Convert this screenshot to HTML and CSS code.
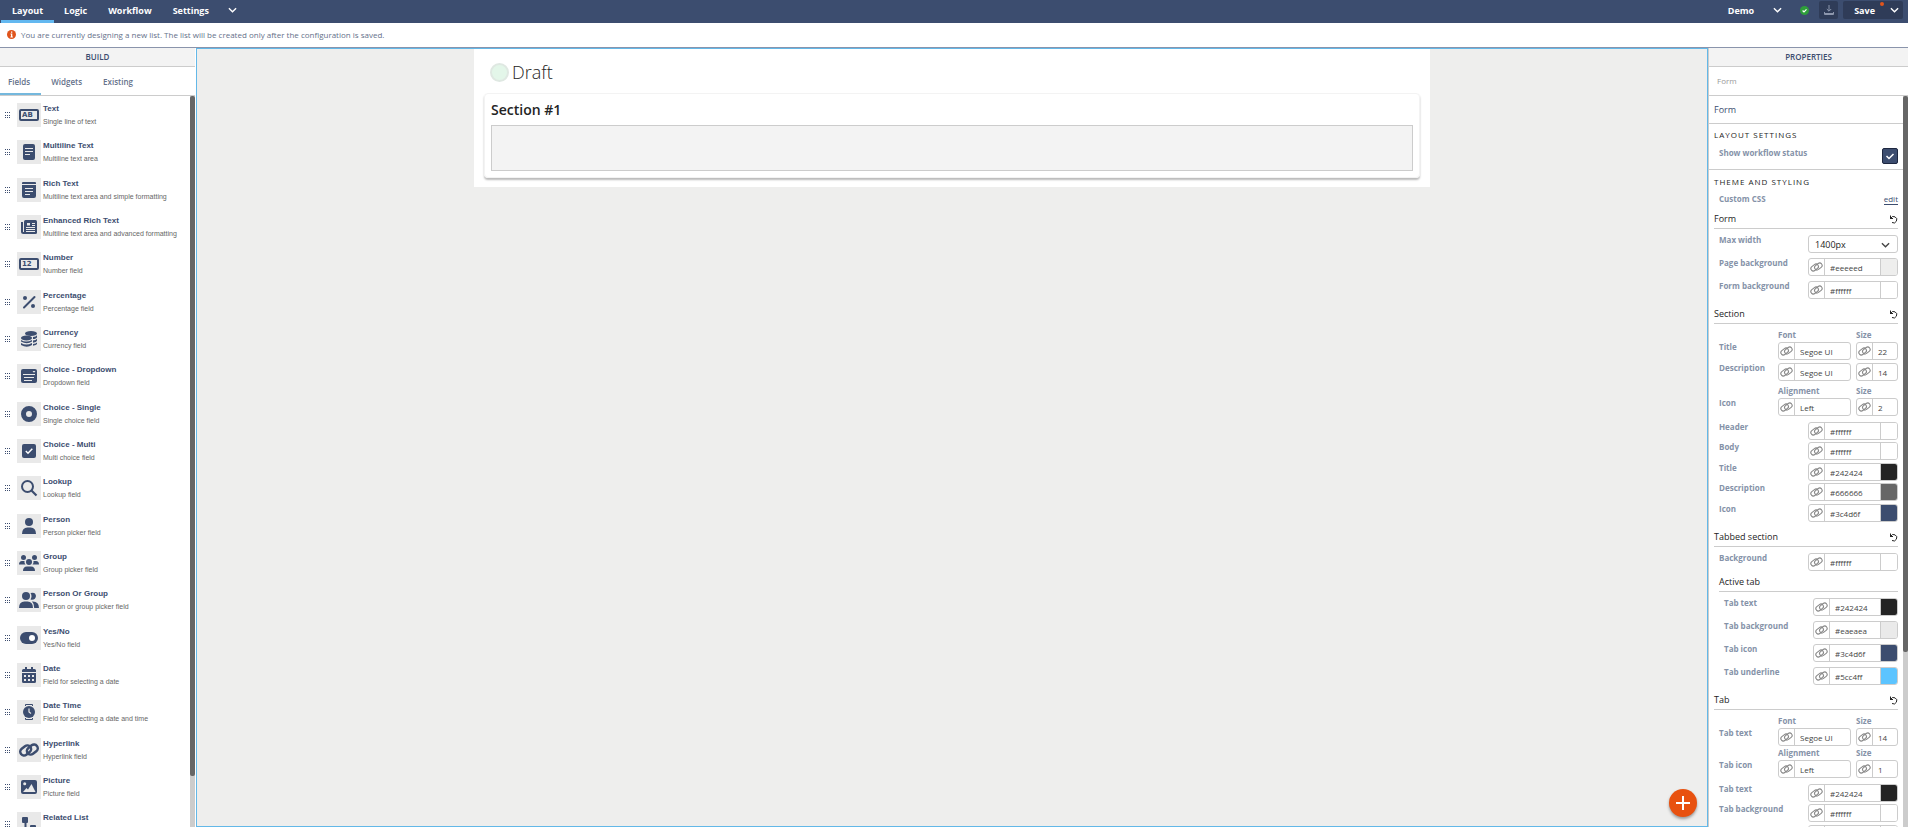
FILE: index.html
```html
<!DOCTYPE html>
<html lang="en">
<head>
<meta charset="UTF-8">
<meta name="viewport" content="width=device-width, initial-scale=1.0">
<title>Form Designer</title>
<link rel="stylesheet" href="styles.css">
</head>
<body>

<!-- shared icons -->
<svg class="sprite" aria-hidden="true">
  <symbol id="chevron" viewBox="0 0 10 6"><path d="M1 1l4 4 4-4" fill="none" stroke="currentColor" stroke-width="1.500"/></symbol>
  <symbol id="grip" viewBox="0 0 5 7"><path d="M0 0h1v1H0zM2 0h1v1H2zM4 0h1v1H4zM0 3h1v1H0zM2 3h1v1H2zM4 3h1v1H4zM0 5h1v1H0zM2 5h1v1H2zM4 5h1v1H4z" fill="currentColor"/></symbol>
  <symbol id="link" viewBox="0 0 24 20"><g fill="none" stroke="currentColor" stroke-width="3"><rect x="1" y="6" width="14" height="9" rx="4.500" transform="rotate(-38 8 10.500)"/><rect x="9" y="5" width="14" height="9" rx="4.500" transform="rotate(-38 16 9.500)"/></g></symbol>
  <symbol id="chain" viewBox="0 0 12 10"><g fill="none" stroke="currentColor"><rect x=".5" y="3.200" width="7.500" height="4.500" rx="2.200" transform="rotate(-38 4.300 5.400)"/><rect x="4" y="2.300" width="7.500" height="4.500" rx="2.200" transform="rotate(-38 7.700 4.600)"/></g></symbol>
  <symbol id="undo" viewBox="0 0 9 9"><path d="M1 3.500h3M1.500 3.500V.5M1.700 3.300A3.200 3.200 0 1 1 3 7.500" fill="none" stroke="currentColor"/></symbol>
  <symbol id="i-text" viewBox="0 0 24 24"><rect x="3" y="7" width="18" height="10" rx="1" fill="none" stroke="currentColor" stroke-width="2"/></symbol>
  <symbol id="i-multi" viewBox="0 0 24 24"><rect x="6" y="4" width="12" height="16" rx="2" fill="currentColor"/><path d="M8 8.500h8M8 11.500h8M8 14.500h5" stroke="#e9e9e9"/></symbol>
  <symbol id="i-rich" viewBox="0 0 24 24"><path d="M5 6V5q0-1 1-1h12q1 0 1 1v1zM5 7h14v11q0 2-2 2H7q-2 0-2-2z" fill="currentColor"/><path d="M8 10.500h8M8 13.500h8M8 16.500h5" stroke="#e9e9e9"/></symbol>
  <symbol id="i-news" viewBox="0 0 24 24"><rect x="7" y="5" width="13" height="14" rx="1.500" fill="currentColor"/><path d="M5 7v9.500Q5 18 6.500 18H9" fill="none" stroke="currentColor" stroke-width="2"/><path d="M9 12.500h9M9 14.500h9M9 16.500h9M15 8.500h3M15 10.500h3" stroke="#e9e9e9"/><path d="M10 8h3v2.500h-3z" fill="#e9e9e9"/></symbol>
  <symbol id="i-percent" viewBox="0 0 24 24"><path d="M7 17.500L17.500 7" stroke="currentColor" stroke-width="2" stroke-linecap="round"/><circle cx="8" cy="8" r="2" fill="currentColor"/><circle cx="16" cy="16" r="2" fill="currentColor"/></symbol>
  <symbol id="i-coins" viewBox="0 0 24 24"><g fill="currentColor"><ellipse cx="14" cy="6.500" rx="6" ry="2.500"/><path d="M16 10q3-.4 4-1.800v2Q19.500 12 16 12zM16 13.500q3-.4 4-1.800v2q-.5 1.500-4 2zM16 17q3-.4 4-1.500v1.500q-.5 1.300-4 1.800z"/><ellipse cx="9.500" cy="11" rx="5.500" ry="2.500"/><path d="M4 13q5 3 11 0v1.500q-5 3.500-11 0zM4 16q5 3 11 0v2q-5 3.500-11 0z"/></g></symbol>
  <symbol id="i-drop" viewBox="0 0 24 24"><rect x="4" y="5" width="16" height="14" rx="2" fill="currentColor"/><path d="M6 10.500h12M7 13.500h10M7 16.500h8" stroke="#e9e9e9"/><path d="M15.500 7h3L17 8.700z" fill="#e9e9e9"/></symbol>
  <symbol id="i-radio" viewBox="0 0 24 24"><circle cx="12" cy="12" r="5.500" fill="none" stroke="currentColor" stroke-width="5"/></symbol>
  <symbol id="i-check" viewBox="0 0 24 24"><rect x="5" y="5" width="14" height="14" rx="2" fill="currentColor"/><path d="M8.800 12l2.200 2.200 4.300-4.400" fill="none" stroke="#fff" stroke-width="1.500"/></symbol>
  <symbol id="i-search" viewBox="0 0 24 24"><circle cx="10.500" cy="10.500" r="5.500" fill="none" stroke="currentColor" stroke-width="2"/><path d="M14.500 14.500l5 5" stroke="currentColor" stroke-width="2.200"/></symbol>
  <symbol id="i-person" viewBox="0 0 24 24"><circle cx="12" cy="8" r="4" fill="currentColor"/><path d="M5 20q0-6.500 5.500-6.500h3Q19 13.500 19 20z" fill="currentColor"/></symbol>
  <symbol id="i-group" viewBox="0 0 24 24"><g fill="currentColor"><circle cx="6.500" cy="6.500" r="2.500"/><circle cx="17.500" cy="6.500" r="2.500"/><circle cx="12" cy="11" r="3"/><path d="M2 13.500q0-3.500 3-3.500h2.500q-.4 2 1 3.500zM22 13.500q0-3.500-3-3.500h-2.500q.4 2-1 3.500zM6 20q0-4.500 4-4.500h4q4 0 4 4.500z"/></g></symbol>
  <symbol id="i-people" viewBox="0 0 24 24"><g fill="currentColor"><circle cx="9" cy="8" r="4"/><path d="M2 20q0-6.500 5.500-6.500h3q5.500 0 5.500 6.500zM13.500 11.500q2-3.500 0-6.500 5-1.500 5.500 3-.5 4.500-5.500 3.500zM15 13.500q7-.5 7 6.500h-4.800q0-4.500-2.200-6.500z"/></g></symbol>
  <symbol id="i-toggle" viewBox="0 0 24 24"><rect x="3" y="6" width="18" height="12" rx="6" fill="currentColor"/><circle cx="15" cy="12" r="3" fill="#fff"/></symbol>
  <symbol id="i-date" viewBox="0 0 24 24"><path d="M5 9V7.500Q5 6 6.500 6H8V4h2v2h4V4h2v2h1.500Q19 6 19 7.500V9zM5 10h14v8.500q0 1.500-1.500 1.500h-11Q5 20 5 18.500z" fill="currentColor"/><path d="M7 12h2v2H7zM11 12h2v2h-2zM15 12h2v2h-2zM7 16h2v2H7zM11 16h2v2h-2zM15 16h2v2h-2z" fill="#e9e9e9"/></symbol>
  <symbol id="i-watch" viewBox="0 0 24 24"><circle cx="12" cy="12" r="6" fill="currentColor"/><path d="M8.500 6V4.500h7V6M8.500 18v1.500h7V18" fill="none" stroke="currentColor"/><path d="M12 8.500V12l2 1.500" fill="none" stroke="#e9e9e9" stroke-width="1.200"/></symbol>
  <symbol id="i-picture" viewBox="0 0 24 24"><rect x="4" y="5" width="16" height="14" rx="2" fill="currentColor"/><circle cx="7.700" cy="8.800" r="1.500" fill="#e9e9e9"/><path d="M6 17l3.500-4 1.500 1.500L14.500 9l4 8z" fill="#e9e9e9"/></symbol>
  <symbol id="i-related" viewBox="0 0 24 24"><rect x="5" y="5" width="6" height="6" rx="1" fill="currentColor"/><path d="M8.500 10v6.500H14" fill="none" stroke="currentColor" stroke-width="2"/><rect x="13" y="13" width="6" height="6" rx="1" fill="currentColor"/></symbol>
</svg>

<header class="topbar">
  <nav class="topnav">
    <a class="active" href="#">Layout</a>
    <a href="#">Logic</a>
    <a href="#">Workflow</a>
    <a href="#">Settings</a>
    <button class="more" aria-label="More"><svg class="chev"><use href="#chevron"/></svg></button>
  </nav>
  <div class="actions">
    <button class="demo">Demo <svg class="chev"><use href="#chevron"/></svg></button>
    <svg class="status-ok" viewBox="0 0 9 9"><circle cx="4.500" cy="4.500" r="4.500" fill="#2e9e3a"/><path d="M2.600 4.500l1.400 1.400 2.500-2.500" fill="none" stroke="#fff" stroke-width="1.200"/></svg>
    <button class="download" aria-label="Download"><svg viewBox="0 0 10 10"><path d="M5 0v6M2.800 4L5 6.200 7.200 4M.5 7v2.500h9V7" fill="none" stroke="currentColor"/><path d="M1 8h8v1.500H1z" fill="currentColor"/></svg></button>
    <button class="save">Save <svg class="chev"><use href="#chevron"/></svg><span class="dot"></span></button>
  </div>
</header>

<div class="notice">
  <svg viewBox="0 0 9 9"><circle cx="4.500" cy="4.500" r="4.500" fill="#e0541c"/><path d="M4 1.500h1.300v1.200H4zM3.500 3.500h1.800v3h.6v1H3.400v-1H4v-2h-.5z" fill="#fff"/></svg>
  <span>You are currently designing a new list. The list will be created only after the configuration is saved.</span>
</div>

<main class="designer">

  <aside class="build">
    <h2 class="panel-title">BUILD</h2>
    <nav class="tabs">
      <a class="active" href="#">Fields</a>
      <a href="#">Widgets</a>
      <a href="#">Existing</a>
    </nav>
    <div class="scroller">
      <ul class="fields">
        <li><svg class="grip"><use href="#grip"/></svg><span class="icon"><svg><use href="#i-text"/></svg><b class="glyph">AB</b></span><div><h3>Text</h3><p>Single line of text</p></div></li>
        <li><svg class="grip"><use href="#grip"/></svg><span class="icon"><svg><use href="#i-multi"/></svg></span><div><h3>Multiline Text</h3><p>Multiline text area</p></div></li>
        <li><svg class="grip"><use href="#grip"/></svg><span class="icon"><svg><use href="#i-rich"/></svg></span><div><h3>Rich Text</h3><p>Multiline text area and simple formatting</p></div></li>
        <li><svg class="grip"><use href="#grip"/></svg><span class="icon"><svg><use href="#i-news"/></svg></span><div><h3>Enhanced Rich Text</h3><p>Multiline text area and advanced formatting</p></div></li>
        <li><svg class="grip"><use href="#grip"/></svg><span class="icon"><svg><use href="#i-text"/></svg><b class="glyph">12</b></span><div><h3>Number</h3><p>Number field</p></div></li>
        <li><svg class="grip"><use href="#grip"/></svg><span class="icon"><svg><use href="#i-percent"/></svg></span><div><h3>Percentage</h3><p>Percentage field</p></div></li>
        <li><svg class="grip"><use href="#grip"/></svg><span class="icon"><svg><use href="#i-coins"/></svg></span><div><h3>Currency</h3><p>Currency field</p></div></li>
        <li><svg class="grip"><use href="#grip"/></svg><span class="icon"><svg><use href="#i-drop"/></svg></span><div><h3>Choice - Dropdown</h3><p>Dropdown field</p></div></li>
        <li><svg class="grip"><use href="#grip"/></svg><span class="icon"><svg><use href="#i-radio"/></svg></span><div><h3>Choice - Single</h3><p>Single choice field</p></div></li>
        <li><svg class="grip"><use href="#grip"/></svg><span class="icon"><svg><use href="#i-check"/></svg></span><div><h3>Choice - Multi</h3><p>Multi choice field</p></div></li>
        <li><svg class="grip"><use href="#grip"/></svg><span class="icon"><svg><use href="#i-search"/></svg></span><div><h3>Lookup</h3><p>Lookup field</p></div></li>
        <li><svg class="grip"><use href="#grip"/></svg><span class="icon"><svg><use href="#i-person"/></svg></span><div><h3>Person</h3><p>Person picker field</p></div></li>
        <li><svg class="grip"><use href="#grip"/></svg><span class="icon"><svg><use href="#i-group"/></svg></span><div><h3>Group</h3><p>Group picker field</p></div></li>
        <li><svg class="grip"><use href="#grip"/></svg><span class="icon"><svg><use href="#i-people"/></svg></span><div><h3>Person Or Group</h3><p>Person or group picker field</p></div></li>
        <li><svg class="grip"><use href="#grip"/></svg><span class="icon"><svg><use href="#i-toggle"/></svg></span><div><h3>Yes/No</h3><p>Yes/No field</p></div></li>
        <li><svg class="grip"><use href="#grip"/></svg><span class="icon"><svg><use href="#i-date"/></svg></span><div><h3>Date</h3><p>Field for selecting a date</p></div></li>
        <li><svg class="grip"><use href="#grip"/></svg><span class="icon"><svg><use href="#i-watch"/></svg></span><div><h3>Date Time</h3><p>Field for selecting a date and time</p></div></li>
        <li><svg class="grip"><use href="#grip"/></svg><span class="icon"><svg class="wide"><use href="#link"/></svg></span><div><h3>Hyperlink</h3><p>Hyperlink field</p></div></li>
        <li><svg class="grip"><use href="#grip"/></svg><span class="icon"><svg><use href="#i-picture"/></svg></span><div><h3>Picture</h3><p>Picture field</p></div></li>
        <li><svg class="grip"><use href="#grip"/></svg><span class="icon"><svg><use href="#i-related"/></svg></span><div><h3>Related List</h3></div></li>
      </ul>
      <div class="track"><div class="thumb"></div></div>
    </div>
  </aside>

  <section class="canvas">
    <div class="form">
      <div class="stage"><span class="circle"></span><h1>Draft</h1></div>
      <div class="section">
        <h2>Section #1</h2>
        <div class="dropzone"></div>
      </div>
    </div>
    <button class="fab" aria-label="Add"><svg viewBox="0 0 14 14"><path d="M7 0v14M0 7h14" stroke="#fff" stroke-width="2"/></svg></button>
  </section>

  <aside class="props">
    <h2 class="panel-title">PROPERTIES</h2>
    <div class="crumb">Form</div>
    <div class="scroller">
      <div class="props-body">
        <h3 class="name">Form</h3>

        <div class="block ruled">
          <h4>LAYOUT SETTINGS</h4>
          <div class="row"><label for="wf">Show workflow status</label><input class="check" type="checkbox" id="wf" checked></div>
        </div>

        <div class="block">
          <h4>THEME AND STYLING</h4>
          <div class="row css-row"><span class="label">Custom CSS</span><a href="#">edit</a></div>

          <h5>Form <button aria-label="Reset form"><svg><use href="#undo"/></svg></button></h5>
          <div class="rows loose">
            <div class="row"><label for="mw">Max width</label><div class="select"><select id="mw"><option>1400px</option></select><svg class="chev"><use href="#chevron"/></svg></div></div>
            <div class="row"><label for="pb">Page background</label><div class="color"><svg><use href="#chain"/></svg><input type="text" id="pb" value="#eeeeed"><i class="c-page"></i></div></div>
            <div class="row"><label for="fb">Form background</label><div class="color"><svg><use href="#chain"/></svg><input type="text" id="fb" value="#ffffff"><i></i></div></div>
          </div>

          <h5>Section <button aria-label="Reset section"><svg><use href="#undo"/></svg></button></h5>
          <div class="caps"><span>Font</span><span>Size</span></div>
          <div class="rows">
            <div class="row"><label for="stf">Title</label><div class="font"><svg><use href="#chain"/></svg><input type="text" id="stf" value="Segoe UI"></div><div class="size"><svg><use href="#chain"/></svg><input type="text" aria-label="Title size" value="22"></div></div>
            <div class="row"><label for="sdf">Description</label><div class="font"><svg><use href="#chain"/></svg><input type="text" id="sdf" value="Segoe UI"></div><div class="size"><svg><use href="#chain"/></svg><input type="text" aria-label="Description size" value="14"></div></div>
          </div>
          <div class="caps"><span>Alignment</span><span>Size</span></div>
          <div class="rows">
            <div class="row"><label for="sia">Icon</label><div class="font"><svg><use href="#chain"/></svg><input type="text" id="sia" value="Left"></div><div class="size"><svg><use href="#chain"/></svg><input type="text" aria-label="Icon size" value="2"></div></div>
          </div>
          <div class="rows colors">
            <div class="row"><label for="sh">Header</label><div class="color"><svg><use href="#chain"/></svg><input type="text" id="sh" value="#ffffff"><i></i></div></div>
            <div class="row"><label for="sb">Body</label><div class="color"><svg><use href="#chain"/></svg><input type="text" id="sb" value="#ffffff"><i></i></div></div>
            <div class="row"><label for="st">Title</label><div class="color"><svg><use href="#chain"/></svg><input type="text" id="st" value="#242424"><i class="c-dark"></i></div></div>
            <div class="row"><label for="sd">Description</label><div class="color"><svg><use href="#chain"/></svg><input type="text" id="sd" value="#666666"><i class="c-grey"></i></div></div>
            <div class="row"><label for="si">Icon</label><div class="color"><svg><use href="#chain"/></svg><input type="text" id="si" value="#3c4d6f"><i class="c-navy"></i></div></div>
          </div>

          <h5>Tabbed section <button aria-label="Reset tabbed section"><svg><use href="#undo"/></svg></button></h5>
          <div class="rows">
            <div class="row"><label for="tb">Background</label><div class="color"><svg><use href="#chain"/></svg><input type="text" id="tb" value="#ffffff"><i></i></div></div>
          </div>
          <div class="nested">
            <h6>Active tab</h6>
            <div class="rows loose">
              <div class="row"><label for="att">Tab text</label><div class="color"><svg><use href="#chain"/></svg><input type="text" id="att" value="#242424"><i class="c-dark"></i></div></div>
              <div class="row"><label for="atb">Tab background</label><div class="color"><svg><use href="#chain"/></svg><input type="text" id="atb" value="#eaeaea"><i class="c-light"></i></div></div>
              <div class="row"><label for="ati">Tab icon</label><div class="color"><svg><use href="#chain"/></svg><input type="text" id="ati" value="#3c4d6f"><i class="c-navy"></i></div></div>
              <div class="row"><label for="atu">Tab underline</label><div class="color"><svg><use href="#chain"/></svg><input type="text" id="atu" value="#5cc4ff"><i class="c-sky"></i></div></div>
            </div>
          </div>

          <h5>Tab <button aria-label="Reset tab"><svg><use href="#undo"/></svg></button></h5>
          <div class="caps"><span>Font</span><span>Size</span></div>
          <div class="rows">
            <div class="row"><label for="ttf">Tab text</label><div class="font"><svg><use href="#chain"/></svg><input type="text" id="ttf" value="Segoe UI"></div><div class="size"><svg><use href="#chain"/></svg><input type="text" aria-label="Tab text size" value="14"></div></div>
          </div>
          <div class="caps tight"><span>Alignment</span><span>Size</span></div>
          <div class="rows">
            <div class="row"><label for="tia">Tab icon</label><div class="font"><svg><use href="#chain"/></svg><input type="text" id="tia" value="Left"></div><div class="size"><svg><use href="#chain"/></svg><input type="text" aria-label="Tab icon size" value="1"></div></div>
          </div>
          <div class="rows colors">
            <div class="row"><label for="tt">Tab text</label><div class="color"><svg><use href="#chain"/></svg><input type="text" id="tt" value="#242424"><i class="c-dark"></i></div></div>
            <div class="row"><label for="tbg">Tab background</label><div class="color"><svg><use href="#chain"/></svg><input type="text" id="tbg" value="#ffffff"><i></i></div></div>
            <div class="row last"><div class="color"><svg><use href="#chain"/></svg><input type="text" aria-label="Tab icon color"><i></i></div></div>
          </div>
        </div>
      </div>
      <div class="track"><div class="thumb"></div></div>
    </div>
  </aside>

</main>
</body>
</html>
```
FILE: styles.css
```css
* {
  box-sizing: border-box;
}

body {
  margin: 0;
  height: 100vh;
  display: flex;
  flex-direction: column;
  overflow: hidden;
  background: #fff;
  color: #3c4d6f;
  font-family: "Open Sans", "Noto Sans", sans-serif;
  font-size: 8px;
}

h1, h2, h3, h4, h5, h6, p, ul {
  margin: 0;
  padding: 0;
  font-weight: 400;
}

a {
  color: inherit;
  text-decoration: none;
}

button, input, select {
  font-family: inherit;
  margin: 0;
  padding: 0;
  border: 0;
  background: none;
  color: inherit;
}

.sprite {
  display: none;
}

.chev {
  width: 9px;
  height: 6px;
}

/* top bar */
.topbar {
  flex: none;
  height: 23px;
  display: flex;
  justify-content: space-between;
  background: #3c4d6f;
  color: #fff;
  font-size: 9px;
  font-weight: 700;
}

.topnav {
  display: flex;
  padding-left: 1px;
}

.topnav a {
  padding: 1px 11px 0 10px;
  line-height: 20px;
}

.topnav .active {
  padding-left: 11px;
  line-height: 19px;
  border-bottom: 3px solid #63b8f0;
}

.more {
  height: 20px;
  padding: 0 8px;
  display: flex;
  align-items: center;
}

.actions {
  display: flex;
  align-items: center;
  padding: 0 5px 3px 0;
}

.demo, .save {
  display: flex;
  align-items: center;
  font-size: 9px;
  font-weight: 700;
}

.demo {
  gap: 19px;
}

.status-ok {
  width: 9px;
  height: 9px;
  margin: 0 10px 0 18px;
}

.download, .save {
  height: 18px;
  background: #2f3c58;
  border-radius: 2px;
}

.download {
  width: 19px;
  margin-right: 5px;
  color: #8d97ad;
}

.download svg {
  width: 10px;
  height: 10px;
  display: block;
  margin: 0 auto;
}

.save {
  position: relative;
  gap: 15px;
  padding: 0 4px 0 11px;
}

.dot {
  position: absolute;
  top: 1px;
  right: 19px;
  width: 4px;
  height: 4px;
  border-radius: 50%;
  background: #e0541c;
}

/* notice */
.notice {
  flex: none;
  height: 25px;
  display: flex;
  align-items: center;
  gap: 5px;
  padding: 0 0 1px 7px;
  border-bottom: 1px solid #8a94ab;
  color: #65718a;
}

.notice svg {
  width: 9px;
  height: 9px;
}

.designer {
  flex: 1;
  min-height: 0;
  display: grid;
  grid-template-columns: 195px 1fr 200px;
}

/* side panels */
.build, .props {
  display: flex;
  flex-direction: column;
  min-height: 0;
}

.props {
  border-left: 1px solid #ccc;
}

.panel-title {
  flex: none;
  height: 19px;
  line-height: 18px;
  border-bottom: 1px solid #ccc;
  background: #f3f3f3;
  text-align: center;
  font-size: 8px;
  font-weight: 600;
}

.tabs {
  flex: none;
  height: 29px;
  display: flex;
  border-bottom: 1px solid #ccc;
  color: #65718a;
  font-weight: 600;
}

.tabs a {
  padding: 2px 11px 0 10px;
  line-height: 26px;
}

.tabs .active {
  padding-left: 8px;
  border-bottom: 2px solid #74b8dd;
}

.scroller {
  flex: 1;
  min-height: 0;
  display: grid;
  grid-template-columns: 1fr 5px;
}

.track {
  background: #ccc;
}

.thumb {
  height: 93%;
  border-radius: 2px;
  background: #666;
}

.props .thumb {
  height: 76%;
}

.fields {
  overflow: hidden;
  list-style: none;
  padding-top: 7px;
}

.fields li {
  height: 37px;
  display: grid;
  grid-template-columns: 12px 24px 1fr;
  align-items: start;
  padding-left: 5px;
  font-family: "Liberation Sans", Arial, sans-serif;
}

.fields li:nth-child(3n+2) {
  height: 38px;
}

.fields h3 {
  padding-left: 2px;
  line-height: 11px;
  font-size: 8px;
  font-weight: 700;
}

.fields p {
  padding: 3px 0 0 2px;
  line-height: 10px;
  font-size: 7px;
  color: #666;
  white-space: nowrap;
}

.grip {
  width: 5px;
  height: 7px;
  margin-top: 9px;
}

.icon {
  position: relative;
  height: 24px;
  background: #e9e9e9;
}

.icon svg {
  display: block;
  width: 24px;
  height: 24px;
}

.icon .wide {
  padding: 2px;
}

.glyph {
  position: absolute;
  left: 5px;
  top: 7px;
  line-height: 10px;
  font-size: 7px;
  font-family: "DejaVu Sans", sans-serif;
}

/* canvas */
.canvas {
  position: relative;
  margin-left: 1px;
  border: 1px solid #63b8e8;
  background: #eeeeed;
}

.form {
  width: 956px;
  max-width: 100%;
  margin: 0 auto;
  padding: 13px 10px 9px;
  background: #fff;
  color: #242424;
}

.stage {
  height: 20px;
  display: flex;
  align-items: center;
  gap: 3px;
  padding-left: 6px;
}

.stage h1 {
  font-size: 18px;
  font-weight: 300;
  line-height: 20px;
}

.circle {
  width: 19px;
  height: 19px;
  border: 2px solid #dfe8e2;
  border-radius: 50%;
  background: #e3f6e9;
}

.section {
  margin-top: 11px;
  padding: 6px;
  border: 1px solid #f3f3f3;
  border-radius: 4px;
  box-shadow: 0 2px 2px #bbb;
}

.section h2 {
  font-size: 14px;
  font-weight: 600;
  line-height: 20px;
}

.dropzone {
  height: 46px;
  margin-top: 5px;
  border: 1px solid #ccc;
  background: #f3f3f3;
}

.fab {
  position: absolute;
  right: 10px;
  bottom: 9px;
  width: 28px;
  height: 28px;
  border-radius: 50%;
  background: #e8510f;
  box-shadow: 0 2px 3px #999;
}

.fab svg {
  display: block;
  width: 14px;
  height: 14px;
  margin: 0 auto;
}

/* properties */
.crumb {
  flex: none;
  height: 29px;
  line-height: 28px;
  padding-left: 8px;
  border-bottom: 1px solid #ccc;
  color: #999;
}

.props-body {
  overflow: hidden;
}

.name {
  height: 28px;
  line-height: 27px;
  padding-left: 5px;
  border-bottom: 1px solid #ccc;
  font-size: 9px;
}

.block {
  padding: 5px 5px 0;
}

.ruled {
  height: 46px;
  padding-top: 4px;
  border-bottom: 1px solid #ccc;
}

.block h4 {
  height: 14px;
  line-height: 14px;
  color: #242424;
  font-size: 8px;
  letter-spacing: 1px;
}

.row {
  height: 18px;
  display: flex;
  gap: 5px;
  padding-left: 5px;
}

.row label, .row .label {
  flex: 1;
  line-height: 10px;
  color: #8592a8;
  font-weight: 700;
  white-space: nowrap;
}

.ruled .row {
  margin-top: 6px;
}

.last {
  justify-content: flex-end;
}

.css-row {
  height: 10px;
  margin-top: 5px;
}

.css-row a {
  line-height: 10px;
  height: 11px;
  border-bottom: 1px solid #3c4d6f;
}

.check {
  appearance: none;
  width: 16px;
  height: 16px;
  border: 1px solid #1d2740;
  border-radius: 2px;
  background: #3c4d6f url("data:image/svg+xml,%3Csvg xmlns='http://www.w3.org/2000/svg' viewBox='0 0 14 14'%3E%3Cpath d='M3.500 7l2.500 2.500L10.500 5' fill='none' stroke='white' stroke-width='1.500'/%3E%3C/svg%3E");
}

.block h5, .block h6 {
  display: flex;
  justify-content: space-between;
  margin-bottom: 6px;
  border-bottom: 1px solid #ccc;
  color: #242424;
  font-size: 9px;
}

.block h5 {
  height: 25px;
  padding-top: 7px;
  line-height: 16px;
}

.block h6 {
  height: 21px;
  padding-top: 3px;
  line-height: 16px;
}

h5 button {
  height: 16px;
}

h5 svg {
  display: block;
  width: 9px;
  height: 9px;
}

.nested {
  padding-left: 5px;
}

.rows {
  display: grid;
  gap: 3px;
}

.loose {
  gap: 5px;
}

.colors {
  margin-top: 6px;
}

.colors .row:nth-child(even) {
  margin-top: -1px;
}

.caps {
  height: 12px;
  display: grid;
  grid-template-columns: 73px 42px;
  gap: 5px;
  justify-content: end;
  line-height: 10px;
  color: #8592a8;
  font-weight: 700;
}

.rows + .caps {
  margin-top: 5px;
}

.rows + .tight {
  margin-top: 2px;
}

.color, .font, .size, .select {
  display: flex;
  height: 18px;
  border: 1px solid #ccc;
  border-radius: 3px;
  overflow: hidden;
}

.color, .select {
  width: 90px;
}

.nested .color {
  width: 85px;
}

.font {
  width: 73px;
}

.size {
  width: 42px;
}

.color > svg, .font > svg, .size > svg {
  flex: none;
  width: 16px;
  height: 16px;
  padding: 2px 1px;
  border-right: 1px solid #ccc;
  color: #888;
}

.color input, .font input, .size input {
  flex: 1;
  min-width: 0;
  padding-left: 5px;
  color: #444;
  font-size: 8px;
}

.color i {
  width: 17px;
  border-left: 1px solid #ccc;
  background: #fff;
}

.color .c-page { background: #eeeeed; }
.color .c-dark { background: #242424; }
.color .c-grey { background: #666; }
.color .c-navy { background: #3c4d6f; }
.color .c-light { background: #eaeaea; }
.color .c-sky { background: #5cc4ff; }

.select {
  position: relative;
}

.select select {
  appearance: none;
  width: 100%;
  padding-left: 6px;
  color: #242424;
  font-size: 9px;
}

.select .chev {
  position: absolute;
  right: 7px;
  top: 6px;
  color: #444;
  pointer-events: none;
}
```
